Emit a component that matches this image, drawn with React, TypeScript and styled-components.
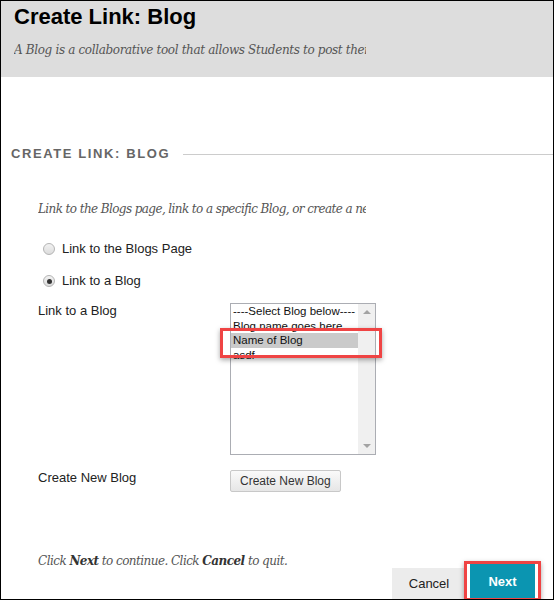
import React, { useState } from 'react';
import styled, { createGlobalStyle } from 'styled-components';

const GlobalStyle = createGlobalStyle`
  html, body {
    margin: 0;
    padding: 0;
    background: #fff;
  }
  * {
    box-sizing: border-box;
  }
`;

const Frame = styled.div`
  width: 554px;
  height: 600px;
  border: 1px solid #000;
  background: #fff;
  overflow: hidden;
  display: flex;
  flex-direction: column;
  font-family: 'Liberation Sans', Arial, sans-serif;
  color: #222;
`;

const Header = styled.header`
  height: 76px;
  flex: none;
  background: #dddddd;
  padding: 3px 13px 0;
`;

const Title = styled.h1`
  margin: 0;
  font-size: 22px;
  line-height: 26px;
  font-weight: bold;
  color: #000;
`;

const Clip = styled.div`
  width: 352px;
  overflow: hidden;
  white-space: nowrap;
`;

const Italic = styled.p<{ size?: number; spacing?: number }>`
  margin: 0;
  font-family: 'DejaVu Serif', Georgia, serif;
  font-style: italic;
  font-size: ${(p) => p.size ?? 12}px;
  letter-spacing: ${(p) => p.spacing ?? 0}px;
  line-height: 16px;
  color: #555;
  white-space: nowrap;
  b {
    color: #333;
  }
`;

const Subtitle = styled(Clip)`
  margin-top: 12px;
`;

const SectionHead = styled.div`
  display: flex;
  align-items: center;
  gap: 13px;
  margin-top: 69px;
  padding-left: 10px;
`;

const SectionTitle = styled.h2`
  margin: 0;
  font-size: 13px;
  line-height: 16px;
  font-weight: bold;
  letter-spacing: 1.6px;
  color: #666;
  white-space: nowrap;
`;

const Rule = styled.div`
  flex: 1;
  height: 1px;
  background: #cccccc;
`;

const Body = styled.div`
  padding-left: 37px;
  flex: 1;
  display: flex;
  flex-direction: column;
`;

const Instructions = styled(Clip)`
  margin-top: 39px;
  width: 328px;
`;

const RadioList = styled.div`
  margin-top: 21px;
  padding-left: 5px;
  display: flex;
  flex-direction: column;
  gap: 12px;
`;

const RadioRow = styled.label`
  display: flex;
  align-items: center;
  gap: 7px;
  height: 20px;
  font-size: 13px;
  cursor: pointer;
`;

const RadioDot = styled.span<{ checked: boolean }>`
  width: 12px;
  height: 12px;
  border-radius: 50%;
  border: 1px solid #b4b4b4;
  background: linear-gradient(#f2f2f2, #dcdcdc);
  display: flex;
  align-items: center;
  justify-content: center;
  margin-top: 2px;
  &::after {
    content: '';
    width: 5px;
    height: 5px;
    border-radius: 50%;
    background: ${(p) => (p.checked ? '#333' : 'transparent')};
  }
`;

const FieldRow = styled.div<{ gap: number }>`
  display: grid;
  grid-template-columns: 192px auto;
  align-items: start;
  margin-top: ${(p) => p.gap}px;
`;

const FieldLabel = styled.span`
  font-size: 13px;
  line-height: 16px;
`;

const ListWrap = styled.div`
  position: relative;
  width: 146px;
`;

const ListBox = styled.div`
  width: 146px;
  height: 152px;
  border: 1px solid #abadb3;
  background: #fff;
  display: flex;
`;

const Options = styled.div`
  flex: 1;
`;

const Option = styled.div<{ selected?: boolean }>`
  height: 14.5px;
  line-height: 14.5px;
  font-size: 11.5px;
  padding-left: 2px;
  color: #111;
  white-space: nowrap;
  background: ${(p) => (p.selected ? '#cacaca' : 'transparent')};
`;

const Scrollbar = styled.div`
  width: 17px;
  background: #f0f0f0;
  display: flex;
  flex-direction: column;
  justify-content: space-between;
  align-items: center;
  padding: 6px 0;
`;

const Arrow = styled.span<{ down?: boolean }>`
  width: 0;
  height: 0;
  border-left: 4px solid transparent;
  border-right: 4px solid transparent;
  ${(p) => (p.down ? 'border-top: 4px solid #a3a3a3;' : 'border-bottom: 4px solid #a3a3a3;')}
`;

const Callout = styled.div`
  position: absolute;
  border: 3px solid #ef4444;
  box-shadow: 0 2px 5px rgba(0, 0, 0, 0.35);
  pointer-events: none;
`;

const ListCallout = styled(Callout)`
  left: -10px;
  top: 25px;
  width: 162px;
  height: 30px;
`;

const GreyButton = styled.button`
  height: 22px;
  padding: 0 9px;
  font-family: 'Liberation Sans', Arial, sans-serif;
  font-size: 12px;
  color: #333;
  border: 1px solid #c8c8c8;
  border-radius: 2px;
  background: linear-gradient(#fafafa, #e6e6e6);
  cursor: pointer;
  justify-self: start;
`;

const Footer = styled.div`
  margin-top: auto;
  display: flex;
  flex-direction: column;
`;

const Actions = styled.div`
  display: flex;
  justify-content: flex-end;
  align-items: flex-end;
  gap: 4px;
  padding-right: 18px;
  margin-top: -5px;
`;

const CancelButton = styled.button`
  width: 74px;
  height: 31px;
  border: none;
  background: #ececec;
  font-family: 'Liberation Sans', Arial, sans-serif;
  font-size: 13px;
  color: #222;
  cursor: pointer;
`;

const NextWrap = styled.div`
  position: relative;
`;

const NextButton = styled.button`
  width: 65px;
  height: 35px;
  border: none;
  background: #0b95b1;
  font-family: 'Liberation Sans', Arial, sans-serif;
  font-size: 13px;
  font-weight: bold;
  color: #fff;
  cursor: pointer;
`;

const NextCallout = styled(Callout)`
  left: -6px;
  top: -3px;
  width: 77px;
  height: 40px;
`;

const blogs = ['----Select Blog below----', 'Blog name goes here', 'Name of Blog', 'asdf'];

const App = () => {
  const [mode, setMode] = useState<'page' | 'blog'>('blog');
  const [selected, setSelected] = useState(2);

  return (
    <>
      <GlobalStyle />
      <Frame>
        <Header>
          <Title>Create Link: Blog</Title>
          <Subtitle>
            <Italic spacing={-0.35}>
              A Blog is a collaborative tool that allows Students to post their thoughts
            </Italic>
          </Subtitle>
        </Header>

        <SectionHead>
          <SectionTitle>CREATE LINK: BLOG</SectionTitle>
          <Rule />
        </SectionHead>

        <Body>
          <Instructions>
            <Italic spacing={-0.6}>
              Link to the Blogs page, link to a specific Blog, or create a new Blog.
            </Italic>
          </Instructions>

          <RadioList>
            <RadioRow onClick={() => setMode('page')}>
              <RadioDot checked={mode === 'page'} />
              Link to the Blogs Page
            </RadioRow>
            <RadioRow onClick={() => setMode('blog')}>
              <RadioDot checked={mode === 'blog'} />
              Link to a Blog
            </RadioRow>
          </RadioList>

          <FieldRow gap={13}>
            <FieldLabel>Link to a Blog</FieldLabel>
            <ListWrap>
              <ListBox>
                <Options>
                  {blogs.map((name, i) => (
                    <Option key={name} selected={i === selected} onClick={() => setSelected(i)}>
                      {name}
                    </Option>
                  ))}
                </Options>
                <Scrollbar>
                  <Arrow />
                  <Arrow down />
                </Scrollbar>
              </ListBox>
              <ListCallout />
            </ListWrap>
          </FieldRow>

          <FieldRow gap={15}>
            <FieldLabel>Create New Blog</FieldLabel>
            <GreyButton>Create New Blog</GreyButton>
          </FieldRow>

          <Footer>
            <Italic spacing={-0.55}>
              Click <b>Next</b> to continue. Click <b>Cancel</b> to quit.
            </Italic>
            <Actions>
              <CancelButton>Cancel</CancelButton>
              <NextWrap>
                <NextButton>Next</NextButton>
                <NextCallout />
              </NextWrap>
            </Actions>
          </Footer>
        </Body>
      </Frame>
    </>
  );
};

export default App;
